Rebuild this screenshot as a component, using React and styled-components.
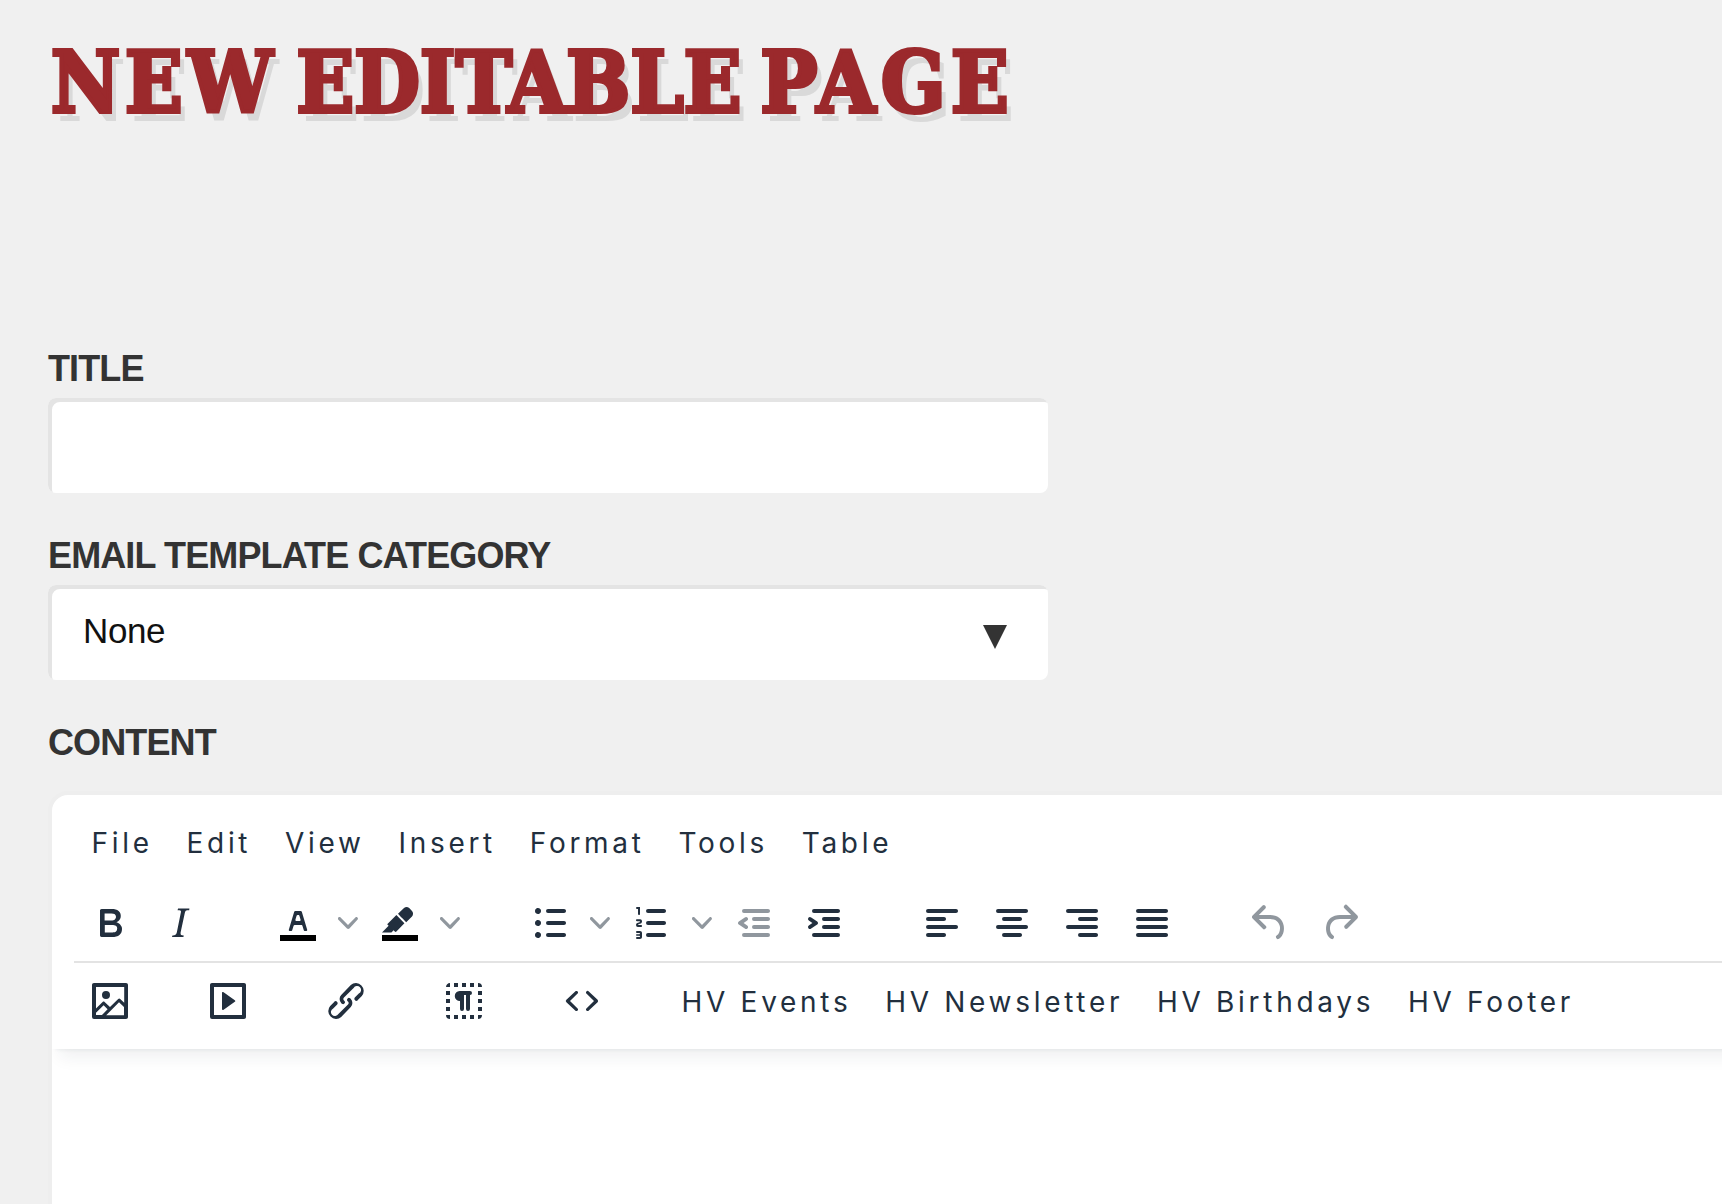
import styled, { createGlobalStyle } from "styled-components";

const BAR = "h14c.6 0 1 .4 1 1s-.4 1-1 1H5a1 1 0 0 1 0-2Z";

const icons = {
  bold: "M7.8 19c-.3 0-.5 0-.6-.2l-.2-.5V5.7c0-.2 0-.4.2-.5l.6-.2h5c1.5 0 2.7.3 3.5 1 .7.6 1.1 1.4 1.1 2.5a3 3 0 0 1-.6 1.9c-.4.6-1 1-1.6 1.2.4.1.9.3 1.3.6s.8.7 1 1.2c.4.4.5 1 .5 1.6 0 1.3-.4 2.3-1.3 3-.8.7-2.1 1-3.8 1H7.8Zm5-8.3c.6 0 1.2-.1 1.6-.5.4-.3.6-.7.6-1.3 0-1.1-.8-1.7-2.3-1.7H9.3v3.5h3.4Zm.5 6c.7 0 1.3-.1 1.7-.4.4-.4.6-.9.6-1.5s-.2-1-.7-1.4c-.4-.3-1-.4-2-.4H9.4v3.8h4Z",
  italic:
    "m16.7 4.7-.1.9h-.3c-.6 0-1 0-1.4.3-.3.3-.4.6-.5 1.1l-2.1 9.8v.6c0 .5.4.8 1.4.8h.2l-.2.8H8l.2-.8h.2c1.1 0 1.8-.5 2-1.5l2-9.8.1-.5c0-.6-.4-.8-1.4-.8h-.3l.2-.9h5.8Z",
  textColor:
    "M8.7 16h-.8a.5.5 0 0 1-.5-.6l2.7-9c.1-.3.3-.4.5-.4h2.8c.2 0 .4.1.5.4l2.7 9a.5.5 0 0 1-.5.6h-.8a.5.5 0 0 1-.4-.4l-.7-2.2c0-.3-.3-.4-.5-.4h-3.4c-.2 0-.4.1-.5.4l-.7 2.2c0 .3-.2.4-.4.4Zm2.6-7.6-.6 2a.5.5 0 0 0 .5.6h1.6a.5.5 0 0 0 .5-.6l-.6-2c0-.3-.3-.4-.5-.4h-.4c-.2 0-.4.1-.5.4Z",
  highlight:
    "M7.7 16.7H3l3.3-3.3-.7-.8L10.2 8l4 4.1-4 4.2c-.2.2-.6.2-.8 0l-.6-.7-1.1 1.1Zm5-7.5L11 7.4l3-2.9a2 2 0 0 1 2.6 0L18 6c.7.7.7 2 0 2.7l-2.9 2.9-1.8-1.8-.5-.6Z",
  bullets:
    "M11 5h8c.6 0 1 .4 1 1s-.4 1-1 1h-8a1 1 0 0 1 0-2Zm0 6h8c.6 0 1 .4 1 1s-.4 1-1 1h-8a1 1 0 0 1 0-2Zm0 6h8c.6 0 1 .4 1 1s-.4 1-1 1h-8a1 1 0 0 1 0-2ZM4.5 6c0-.4.1-.8.4-1 .3-.4.7-.5 1.1-.5.4 0 .8.1 1 .4.4.3.5.7.5 1.1 0 .4-.1.8-.4 1-.3.4-.7.5-1.1.5-.4 0-.8-.1-1-.4-.4-.3-.5-.7-.5-1.1Zm0 6c0-.4.1-.8.4-1 .3-.4.7-.5 1.1-.5.4 0 .8.1 1 .4.4.3.5.7.5 1.1 0 .4-.1.8-.4 1-.3.4-.7.5-1.1.5-.4 0-.8-.1-1-.4-.4-.3-.5-.7-.5-1.1Zm0 6c0-.4.1-.8.4-1 .3-.4.7-.5 1.1-.5.4 0 .8.1 1 .4.4.3.5.7.5 1.1 0 .4-.1.8-.4 1-.3.4-.7.5-1.1.5-.4 0-.8-.1-1-.4-.4-.3-.5-.7-.5-1.1Z",
  numbers:
    "M10 17h8c.6 0 1 .4 1 1s-.4 1-1 1h-8a1 1 0 0 1 0-2Zm0-6h8c.6 0 1 .4 1 1s-.4 1-1 1h-8a1 1 0 0 1 0-2Zm0-6h8c.6 0 1 .4 1 1s-.4 1-1 1h-8a1 1 0 1 1 0-2ZM6 4v3.5c0 .3-.2.5-.5.5a.5.5 0 0 1-.5-.5V5h-.5a.5.5 0 0 1 0-1H6Zm-1 8.8.2.2h1.3c.3 0 .5.2.5.5s-.2.5-.5.5H4.9a1 1 0 0 1-.9-1V13c0-.4.3-.8.6-1l1.2-.4.2-.3a.2.2 0 0 0-.2-.2H4.5a.5.5 0 0 1-.5-.5c0-.3.2-.5.5-.5h1.6c.5 0 .9.4.9 1v.1c0 .4-.3.8-.6 1l-1.2.4-.2.3ZM7 17v2c0 .6-.4 1-1 1H4.5a.5.5 0 0 1 0-1h1.2c.2 0 .3-.1.3-.3 0-.2-.1-.3-.3-.3H4.4a.4.4 0 1 1 0-.8h1.3c.2 0 .3-.1.3-.3 0-.2-.1-.3-.3-.3H4.5a.5.5 0 1 1 0-1H6c.6 0 1 .4 1 1Z",
  outdent:
    "M7 5h12c.6 0 1 .4 1 1s-.4 1-1 1H7a1 1 0 1 1 0-2Zm5 4h7c.6 0 1 .4 1 1s-.4 1-1 1h-7a1 1 0 0 1 0-2Zm0 4h7c.6 0 1 .4 1 1s-.4 1-1 1h-7a1 1 0 0 1 0-2Zm-5 4h12a1 1 0 0 1 0 2H7a1 1 0 0 1 0-2Zm1.6-3.8a1 1 0 0 1-1.2 1.6l-3-2a1 1 0 0 1 0-1.6l3-2a1 1 0 0 1 1.2 1.6L6.8 12l1.8 1.2Z",
  indent:
    "M7 5h12c.6 0 1 .4 1 1s-.4 1-1 1H7a1 1 0 1 1 0-2Zm5 4h7c.6 0 1 .4 1 1s-.4 1-1 1h-7a1 1 0 0 1 0-2Zm0 4h7c.6 0 1 .4 1 1s-.4 1-1 1h-7a1 1 0 0 1 0-2Zm-5 4h12a1 1 0 0 1 0 2H7a1 1 0 0 1 0-2Zm-2.6-3.8L6.2 12l-1.8-1.2a1 1 0 0 1 1.2-1.6l3 2a1 1 0 0 1 0 1.6l-3 2a1 1 0 1 1-1.2-1.6Z",
  alignLeft: `M5 5${BAR}M5 13${BAR}M5 9h8c.6 0 1 .4 1 1s-.4 1-1 1H5a1 1 0 1 1 0-2Zm0 8h8c.6 0 1 .4 1 1s-.4 1-1 1H5a1 1 0 0 1 0-2Z`,
  alignCenter: `M5 5${BAR}M5 13${BAR}M8 9h8c.6 0 1 .4 1 1s-.4 1-1 1H8a1 1 0 1 1 0-2Zm0 8h8c.6 0 1 .4 1 1s-.4 1-1 1H8a1 1 0 0 1 0-2Z`,
  alignRight: `M5 5${BAR}M5 13${BAR}M11 9h8c.6 0 1 .4 1 1s-.4 1-1 1h-8a1 1 0 0 1 0-2Zm0 8h8c.6 0 1 .4 1 1s-.4 1-1 1h-8a1 1 0 0 1 0-2Z`,
  justify: `M5 5${BAR}M5 9${BAR}M5 13${BAR}M5 17${BAR}`,
  undo: "M6.4 8H12c3.7 0 6.2 2 6.8 5.1.6 2.7-.4 5.6-2.3 6.8a1 1 0 0 1-1-1.8c1.1-.6 1.8-2.7 1.4-4.6-.5-2.1-2.1-3.5-4.9-3.5H6.4l3.3 3.3a1 1 0 1 1-1.4 1.4l-5-5a1 1 0 0 1 0-1.4l5-5a1 1 0 0 1 1.4 1.4L6.4 8Z",
  redo: "M17.6 10H12c-2.8 0-4.4 1.4-4.9 3.5-.4 2 .3 4 1.4 4.6a1 1 0 1 1-1 1.8c-2-1.2-2.9-4.1-2.3-6.8.6-3 3-5.1 6.8-5.1h5.6l-3.3-3.3a1 1 0 1 1 1.4-1.4l5 5a1 1 0 0 1 0 1.4l-5 5a1 1 0 0 1-1.4-1.4l3.3-3.3Z",
  image:
    "m5 15.7 3.3-3.2c.3-.3.7-.3 1 0L12 15l4.1-4c.3-.4.8-.4 1 0l2 1.9V5H5v10.7ZM5 18V19h3l2.8-2.9-2-2L5 17.9Zm14-3-2.5-2.4-6.4 6.5H19v-4ZM4 3h16c.6 0 1 .4 1 1v16c0 .6-.4 1-1 1H4a1 1 0 0 1-1-1V4c0-.6.4-1 1-1Zm6 8a2 2 0 1 0 0-4 2 2 0 0 0 0 4Z",
  media:
    "M4 3h16c.6 0 1 .4 1 1v16c0 .6-.4 1-1 1H4a1 1 0 0 1-1-1V4c0-.6.4-1 1-1Zm1 2v14h14V5H5Zm4.8 2.6 5.6 4a.5.5 0 0 1 0 .8l-5.6 4A.5.5 0 0 1 9 16V8a.5.5 0 0 1 .8-.4Z",
  link: "M6.2 12.3a1 1 0 0 1 1.4 1.4l-2 2a2 2 0 1 0 2.6 2.8l4.8-4.8a1 1 0 0 0 0-1.4 1 1 0 1 1 1.4-1.3 2.9 2.9 0 0 1 0 4L9.6 20a3.9 3.9 0 0 1-5.5-5.5l2-2Zm11.6-.6a1 1 0 0 1-1.4-1.4l2-2a2 2 0 1 0-2.6-2.8L11 10.3a1 1 0 0 0 0 1.4A1 1 0 1 1 9.6 13a2.9 2.9 0 0 1 0-4L14.4 4a3.9 3.9 0 0 1 5.5 5.5l-2 2Z",
  blocks:
    "M9 19v2H7v-2h2Zm-4 0v2a2 2 0 0 1-2-2h2Zm8 0v2h-2v-2h2Zm8 0a2 2 0 0 1-2 2v-2h2Zm-4 0v2h-2v-2h2ZM15 7a1 1 0 0 1 0 2v7a1 1 0 0 1-2 0V9h-1v7a1 1 0 0 1-2 0v-4a2.5 2.5 0 0 1-.2-5H15ZM5 15v2H3v-2h2Zm16 0v2h-2v-2h2ZM5 11v2H3v-2h2Zm16 0v2h-2v-2h2ZM5 7v2H3V7h2Zm16 0v2h-2V7h2ZM5 3v2H3c0-1.1.9-2 2-2Zm8 0v2h-2V3h2Zm6 0a2 2 0 0 1 2 2h-2V3ZM9 3v2H7V3h2Zm8 0v2h-2V3h2Z",
  code: "M9.8 15.7c.3.3.3.8 0 1-.3.4-.9.4-1.2 0l-4.4-4.1a.8.8 0 0 1 0-1.2l4.4-4.2c.3-.3.9-.3 1.2 0 .3.3.3.8 0 1.1L6 12l3.8 3.7ZM14.2 15.7c-.3.3-.3.8 0 1 .4.4.9.4 1.2 0l4.4-4.1c.3-.3.3-.8 0-1.2l-4.4-4.2a.8.8 0 0 0-1.2 0c-.3.3-.3.8 0 1.1L18 12l-3.8 3.7Z",
};

const menus = ["File", "Edit", "View", "Insert", "Format", "Tools", "Table"];

const formatGroups = [
  [{ icon: "bold" }, { icon: "italic" }],
  [
    { icon: "textColor", split: true, swatch: true },
    { icon: "highlight", split: true, swatch: true },
  ],
  [
    { icon: "bullets", split: true },
    { icon: "numbers", split: true },
    { icon: "outdent", disabled: true },
    { icon: "indent" },
  ],
  [
    { icon: "alignLeft" },
    { icon: "alignCenter" },
    { icon: "alignRight" },
    { icon: "justify" },
  ],
  [
    { icon: "undo", disabled: true },
    { icon: "redo", disabled: true },
  ],
];

const insertGroups = [
  [{ icon: "image" }],
  [{ icon: "media" }],
  [{ icon: "link" }],
  [{ icon: "blocks" }],
  [{ icon: "code" }],
];

const templates = ["HV Events", "HV Newsletter", "HV Birthdays", "HV Footer"];

const ToolButton = ({ icon, split, swatch, disabled }) => (
  <Tool $split={split} disabled={disabled}>
    <Icon viewBox="0 0 24 24">
      {swatch && <path d="M3 18h18v3H3z" fill="#000" />}
      <path d={icons[icon]} fillRule="evenodd" />
    </Icon>
    {split && (
      <Chevron viewBox="0 0 10 10">
        <path d="M8.7 2.2c.3-.3.8-.3 1 0 .4.4.4.9 0 1.2L5.7 7.8c-.3.3-.9.3-1.2 0L.2 3.4a.8.8 0 0 1 0-1.2c.3-.3.8-.3 1.1 0L5 6l3.7-3.8Z" />
      </Chevron>
    )}
  </Tool>
);

const ToolGroups = ({ groups }) =>
  groups.map((group) => (
    <Group key={group[0].icon}>
      {group.map((tool) => (
        <ToolButton key={tool.icon} {...tool} />
      ))}
    </Group>
  ));

const App = () => {
  return (
    <>
      <GlobalStyle />
      <Page>
        <Heading>
          <Word $spacing={5}>NEW</Word>
          <Word $spacing={0.2}>EDITABLE</Word>
          <Word $spacing={5.5}>PAGE</Word>
        </Heading>
        <Field>
          <Label htmlFor="title">TITLE</Label>
          <TextInput id="title" type="text" />
        </Field>
        <Field>
          <Label>EMAIL TEMPLATE CATEGORY</Label>
          <Select>
            <Value>None</Value>
            <Arrow viewBox="0 0 24 24">
              <path d="M0 0h24L12 24z" />
            </Arrow>
          </Select>
        </Field>
        <Label>CONTENT</Label>
        <Editor>
          <EditorHeader>
            <MenuBar>
              {menus.map((menu) => (
                <TextButton key={menu}>{menu}</TextButton>
              ))}
            </MenuBar>
            <Toolbar>
              <ToolGroups groups={formatGroups} />
            </Toolbar>
            <Divider />
            <Toolbar>
              <ToolGroups groups={insertGroups} />
              <Group>
                {templates.map((name) => (
                  <TextButton key={name}>{name}</TextButton>
                ))}
              </Group>
            </Toolbar>
          </EditorHeader>
        </Editor>
      </Page>
    </>
  );
};
export default App;

const GlobalStyle = createGlobalStyle`
  * {
    box-sizing: border-box;
  }
  body {
    margin: 0;
    background-color: #f0f0f0;
    font-family: "Liberation Sans", Arial, sans-serif;
  }
`;

const Page = styled.main`
  height: 1204px;
  padding: 33px 0 0 48px;
  overflow: hidden;
`;

const Heading = styled.h1`
  display: flex;
  gap: 19px;
  height: 100px;
  margin: 0 0 216px;
  padding-left: 3px;
  color: #9b292c;
  font-family: "DejaVu Serif Condensed", "DejaVu Serif", serif;
  font-size: 84px;
  font-weight: bold;
  line-height: 99px;
  text-shadow: 6px 9px 0 #d9d9d9;
  -webkit-text-stroke: 4px #9b292c;
  white-space: nowrap;
`;

const Word = styled.span`
  letter-spacing: ${({ $spacing }) => $spacing}px;
`;

const Field = styled.div`
  width: 1000px;
  height: 187px;
`;

const Label = styled.label`
  display: block;
  height: 49px;
  color: #333;
  font-size: 36px;
  font-weight: bold;
  line-height: 40px;
  letter-spacing: -0.88px;
`;

const TextInput = styled.input`
  display: block;
  width: 100%;
  height: 95px;
  border: 0;
  border-radius: 8px;
  background-color: #fff;
  box-shadow: inset 4px 4px 0 #e4e4e4;
`;

const Select = styled.div`
  display: flex;
  align-items: center;
  justify-content: space-between;
  height: 95px;
  padding: 0 41px 0 35px;
  border-radius: 8px;
  background-color: #fff;
  box-shadow: inset 4px 4px 0 #e4e4e4;
`;

const Value = styled.span`
  margin-bottom: 4px;
  color: #111;
  font-size: 35px;
  letter-spacing: -0.4px;
`;

const Arrow = styled.svg`
  width: 24px;
  height: 24px;
  margin-top: 9px;
  fill: #333;
`;

const Editor = styled.section`
  width: 1800px;
  height: 600px;
  margin-top: 19px;
  border: 4px solid #eee;
  border-radius: 20px;
  background-color: #fff;
  overflow: hidden;
`;

const EditorHeader = styled.header`
  height: 254px;
  box-shadow: 0 4px 4px -4px rgba(34, 47, 62, 0.1),
    0 16px 16px -8px rgba(34, 47, 62, 0.07);
`;

const MenuBar = styled.nav`
  display: flex;
  height: 92px;
  padding: 19px 0 0 24px;
`;

const Toolbar = styled.div`
  display: flex;
  height: 74px;
  padding-top: 8px;
`;

const Divider = styled.hr`
  height: 2px;
  margin: 0 0 2px 22px;
  border: 0;
  background-color: #e3e3e3;
`;

const Group = styled.div`
  display: flex;
  padding: 0 24px;
`;

const Tool = styled.button`
  display: flex;
  align-items: center;
  gap: 16px;
  width: ${({ $split }) => ($split ? 100 : 68)}px;
  height: 56px;
  margin-right: 2px;
  padding: 0 0 0 10px;
  border: 0;
  background: none;
  color: #222f3e;

  &:disabled {
    color: rgba(34, 47, 62, 0.5);
  }
`;

const Icon = styled.svg`
  flex: none;
  width: 48px;
  height: 48px;
  fill: currentColor;
`;

const Chevron = styled.svg`
  flex: none;
  width: 20px;
  height: 20px;
  fill: rgba(34, 47, 62, 0.5);
`;

const TextButton = styled.button`
  height: 56px;
  margin-right: 2.8px;
  padding: 2px 15.5px 0;
  border: 0;
  background: none;
  color: #222f3e;
  font-family: Inter, "Liberation Sans", sans-serif;
  font-size: 28px;
  letter-spacing: 3.7px;
  white-space: nowrap;
`;
